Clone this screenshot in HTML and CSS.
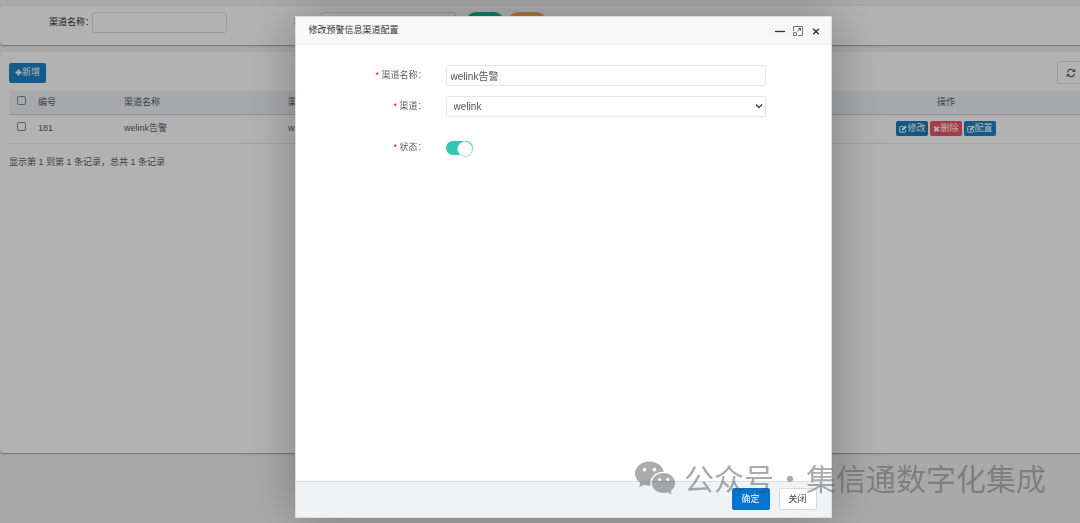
FILE: index.html
```html
<!DOCTYPE html>
<html lang="zh-CN">
<head>
<meta charset="utf-8">
<title>预警信息渠道配置</title>
<link rel="stylesheet" href="styles.css">
</head>
<body>
<svg class="sprite" aria-hidden="true">
  <symbol id="edit" viewBox="0 0 16 16"><path d="M13 9V13a1.500 1.500 0 0 1-1.500 1.500H3A1.500 1.500 0 0 1 1.500 13V4.500A1.500 1.500 0 0 1 3 3H9" fill="none" stroke="currentColor" stroke-width="2"/><path d="M5.500 8 12.500 1l3 3L8.500 11h-3z" fill="currentColor"/></symbol>
  <symbol id="cross" viewBox="0 0 16 16"><path d="M3 3l10 10M13 3L3 13" stroke="currentColor" stroke-width="4.500"/></symbol>
  <symbol id="plus" viewBox="0 0 16 16"><path d="M8 1v14M1 8h14" stroke="currentColor" stroke-width="4.500"/></symbol>
  <symbol id="refresh" viewBox="0 0 16 16"><path d="M2.300 7A5.800 5.800 0 0 1 12.500 4.200M13.700 9A5.800 5.800 0 0 1 3.500 11.800" fill="none" stroke="currentColor" stroke-width="1.900"/><path d="M14.800 1.200v5.300H9.500zM1.200 14.800V9.500h5.300z" fill="currentColor"/></symbol>
</svg>
<main class="page">
  <form class="panel search">
    <label class="search-field"><span>渠道名称：</span><input type="text"></label>
    <label class="search-field search-second"><span>渠道：</span><input type="text"></label>
    <div class="search-actions">
      <button type="button" class="pill pill-search">搜索</button>
      <button type="button" class="pill pill-reset">重置</button>
    </div>
  </form>
  <section class="panel list">
    <div class="toolbar">
      <button type="button" class="btn btn-add"><svg class="icon"><use href="#plus"/></svg>新增</button>
      <button type="button" class="btn-refresh" aria-label="刷新"><svg class="icon icon-large"><use href="#refresh"/></svg></button>
    </div>
    <table class="table">
      <colgroup><col class="col-check"><col class="col-id"><col class="col-name"><col class="col-name"><col><col class="col-actions"></colgroup>
      <thead><tr>
        <th class="cell-check"><input type="checkbox" class="check" aria-label="全选"></th>
        <th>编号</th><th>渠道名称</th><th>渠道</th><th>状态</th><th class="cell-actions">操作</th>
      </tr></thead>
      <tbody><tr>
        <td class="cell-check"><input type="checkbox" class="check" aria-label="选择 181"></td>
        <td>181</td><td>welink告警</td><td>welink</td><td>启用</td>
        <td><div class="actions">
          <button type="button" class="btn btn-mini btn-edit"><svg class="icon"><use href="#edit"/></svg>修改</button>
          <button type="button" class="btn btn-mini btn-delete"><svg class="icon"><use href="#cross"/></svg>删除</button>
          <button type="button" class="btn btn-mini"><svg class="icon"><use href="#edit"/></svg>配置</button>
        </div></td>
      </tr></tbody>
    </table>
    <p class="summary">显示第 1 到第 1 条记录，总共 1 条记录</p>
  </section>
</main>

<div class="overlay">
  <div class="modal" role="dialog" aria-labelledby="dialog-title">
    <header class="modal-head">
      <h1 class="modal-title" id="dialog-title">修改预警信息渠道配置</h1>
      <div class="window-tools">
        <button type="button" class="tool" aria-label="最小化"><svg viewBox="0 0 10 10"><path d="M0 5.500h10" stroke="#2e2d3c" stroke-width="1.300"/></svg></button>
        <button type="button" class="tool" aria-label="最大化"><svg viewBox="0 0 10 10" fill="none" stroke="#77767f"><path d="M.5 5V.5h9v9H5M.5 6.500h3v3h-3zM4.500 5.500l3-3"/><path d="M5.500 2.500h2v2" stroke="#3a3945"/></svg></button>
        <button type="button" class="tool" aria-label="关闭窗口"><svg viewBox="0 0 10 10"><path d="M2.200 2.700l5.600 5.600M7.800 2.700L2.200 8.300" stroke="#2e2d3c" stroke-width="1.300"/></svg></button>
      </div>
    </header>
    <form class="modal-body">
      <label class="form-label" for="name"><span class="required">*</span> 渠道名称：</label>
      <input class="control" id="name" type="text" value="welink告警">
      <label class="form-label" for="channel"><span class="required">*</span> 渠道：</label>
      <div class="select-wrap">
        <select class="control" id="channel"><option>welink</option></select>
        <svg class="chevron" viewBox="0 0 8 8"><path d="M1 2.500l3 3 3-3" fill="none" stroke="#444" stroke-width="1.400"/></svg>
      </div>
      <label class="form-label label-switch" for="state"><span class="required">*</span> 状态：</label>
      <input class="switch" id="state" type="checkbox" checked>
    </form>
    <footer class="modal-foot">
      <button type="button" class="foot-btn foot-ok">确定</button>
      <button type="button" class="foot-btn">关闭</button>
    </footer>
  </div>
</div>

<div class="watermark">
  <svg class="wechat" viewBox="0 0 42 34"><path fill="currentColor" fill-rule="evenodd" d="M15 0C6.500 0 0 5.500 0 12.500c0 4 2 7.300 5.500 9.600L4.200 26.500l5-2.600c2.100.7 4 1 6.800.9C14.500 16.500 20.500 10.500 29.500 10.500 28 4.300 22 0 15 0zM9.800 6.500a1.900 1.900 0 1 1 0 3.800 1.900 1.900 0 0 1 0-3.800zm10.200 0a1.900 1.900 0 1 1 0 3.800 1.900 1.900 0 0 1 0-3.800z"/><path fill="currentColor" fill-rule="evenodd" d="M29.300 11.800c-6.800 0-12 4.600-12 10.300s5.200 10.300 12 10.300c1.600 0 3-.2 4.300-.7l4 2.100-1.100-3.600c2.900-1.900 4.600-4.800 4.600-8.100 0-5.700-5.200-10.300-11.800-10.300zm-4 5.200a1.600 1.600 0 1 1 0 3.200 1.600 1.600 0 0 1 0-3.200zm8.300 0a1.600 1.600 0 1 1 0 3.200 1.600 1.600 0 0 1 0-3.200z"/></svg>
  <span>公众号</span><span class="watermark-dot">·</span><span>集信通数字化集成</span>
</div>
</body>
</html>
```
FILE: styles.css
```css
* { box-sizing: border-box; }
html, body { height: 100%; }
body {
  margin: 0;
  overflow: hidden;
  background: #f3f3f4;
  color: #5c5f61;
  font: 9px/13px "Liberation Sans", "Noto Sans CJK SC", sans-serif;
}
button, input, select { font: inherit; color: inherit; margin: 0; }
button { cursor: pointer; }
.sprite { position: absolute; width: 0; height: 0; }

.page {
  display: flex;
  flex-direction: column;
  gap: 7px;
  width: calc(100% + 25px);
  height: 100%;
  padding: 6px 0 70px;
}
.panel {
  background: #fff;
  border-radius: 4px;
  box-shadow: 0 1px 2px rgba(0, 0, 0, .35);
}
.search {
  display: flex;
  align-items: flex-start;
  height: 39px;
  padding: 6px 0 6px 49px;
  color: #333;
}
.search-field { display: flex; align-items: center; }
.search-field span { width: 43px; line-height: 19px; white-space: nowrap; }
.search-field input {
  width: 135px;
  height: 21px;
  border: 1px solid #ddd;
  border-radius: 3px;
  background: none;
}
.search-second { margin-left: 67px; }
.search-second span { width: 27px; }
.search-actions { display: flex; gap: 4px; margin-left: 10px; }
.pill {
  width: 38px;
  height: 20px;
  padding: 0;
  border: 0;
  border-radius: 10px;
  color: #fff;
}
.pill-search { background: #1ab394; }
.pill-reset { background: #f8ac59; }

.list { flex: 1; padding: 9px 9px 0; }
.toolbar { display: flex; justify-content: space-between; align-items: center; margin-bottom: 7px; }
.btn {
  display: inline-flex;
  align-items: center;
  justify-content: center;
  border: 0;
  border-radius: 2px;
  background: #1c84c6;
  color: #fff;
}
.btn-add { height: 20px; padding: 0 6px; }
.icon { width: 7px; height: 7px; }
.icon-large { width: 10px; height: 10px; }
.btn-refresh {
  display: flex;
  align-items: center;
  width: 39px;
  height: 23px;
  padding: 0 8px;
  border: 1px solid #ddd;
  border-radius: 2px;
  background: none;
}

.table { width: 100%; table-layout: fixed; border-collapse: collapse; }
.col-check { width: 25px; }
.col-id { width: 86px; }
.col-name { width: 164px; }
.col-actions { width: 300px; }
.table th, .table td { padding: 0 4px; text-align: left; font-weight: 400; }
.table th { height: 23px; background: #eff3f8; border-bottom: 1px solid #ccc; }
.table td { height: 29px; border-bottom: 1px solid #e7e7e7; }
.table .cell-actions { text-align: center; }
.table .cell-check { padding: 0; text-align: center; }
.check {
  appearance: none;
  display: inline-block;
  width: 9px;
  height: 9px;
  border: 1px solid #888;
  border-radius: 2px;
}
.actions { display: flex; justify-content: center; gap: 2px; }
.btn-mini { height: 15px; padding: 0 3px; }
.btn-mini .icon { width: 8px; height: 8px; }
.btn-delete .icon { width: 7px; }
.btn-delete { background: #ed5565; }
.btn-edit { background: #1a7bb9; }
.summary { margin: 12px 0 0; }

.overlay {
  position: fixed;
  inset: 0;
  display: flex;
  justify-content: flex-end;
  padding: 16px 23% 5px 0;
  background: rgba(0, 0, 0, .3);
}
.modal {
  display: flex;
  flex-direction: column;
  width: 537px;
  border: 1px solid #ddd;
  background: #fff;
  box-shadow: 1px 1px 50px rgba(0, 0, 0, .3);
}
.modal-head {
  display: flex;
  align-items: center;
  justify-content: space-between;
  height: 28px;
  padding: 0 10px 0 13px;
  border-bottom: 1px solid #eee;
  background: #f8f8f8;
}
.modal-title { margin: 0; color: #333; font-size: 9px; font-weight: 400; }
.window-tools { display: flex; gap: 8px; }
.tool { display: flex; width: 10px; height: 10px; padding: 0; border: 0; background: none; }
.tool svg { width: 10px; height: 10px; }
.modal-body {
  flex: 1;
  display: grid;
  grid-template-columns: 131px 320px;
  column-gap: 19px;
  row-gap: 10px;
  align-content: start;
  padding-top: 20px;
}
.form-label { text-align: right; line-height: 21px; }
.required { color: #f00; }
.control {
  display: block;
  width: 100%;
  height: 21px;
  padding: 0 4px;
  border: 1px solid #e5e6e7;
  border-radius: 2px;
  background: #fff;
  font-size: 10px;
  color: #555;
}
select.control { appearance: none; padding: 0 7px; }
.select-wrap { position: relative; }
.chevron { position: absolute; right: 3px; top: 6px; width: 8px; height: 8px; pointer-events: none; }
.label-switch, .switch { margin-top: 10px; }
.switch {
  appearance: none;
  align-self: center;
  display: flex;
  justify-content: flex-end;
  width: 27px;
  height: 14px;
  border-radius: 7px;
  background: #36c6b8;
}
.switch::before {
  content: "";
  width: 14px;
  height: 14px;
  border: 1px solid #8fdcd4;
  border-radius: 50%;
  background: #fff;
}
.modal-foot {
  display: flex;
  justify-content: flex-end;
  gap: 9px;
  padding: 6px 14px 7px;
  border-top: 1px solid #d8dcdf;
  background: #eff3f6;
}
.foot-btn {
  width: 38px;
  height: 22px;
  padding: 0;
  border: 1px solid #d5d8dc;
  border-radius: 2px;
  background: #fff;
  color: #444;
}
.foot-ok { border-color: #0573cf; background: #0573cf; color: #fff; }

.watermark {
  position: fixed;
  right: 34px;
  bottom: 24px;
  display: flex;
  align-items: center;
  color: #505050;
  opacity: .48;
  font: 400 30px/44px "Noto Sans CJK SC", sans-serif;
  pointer-events: none;
}
.wechat { width: 41px; height: 34px; margin: 2px 8px 0 0; }
.watermark-dot { width: 32px; text-align: center; }
```
